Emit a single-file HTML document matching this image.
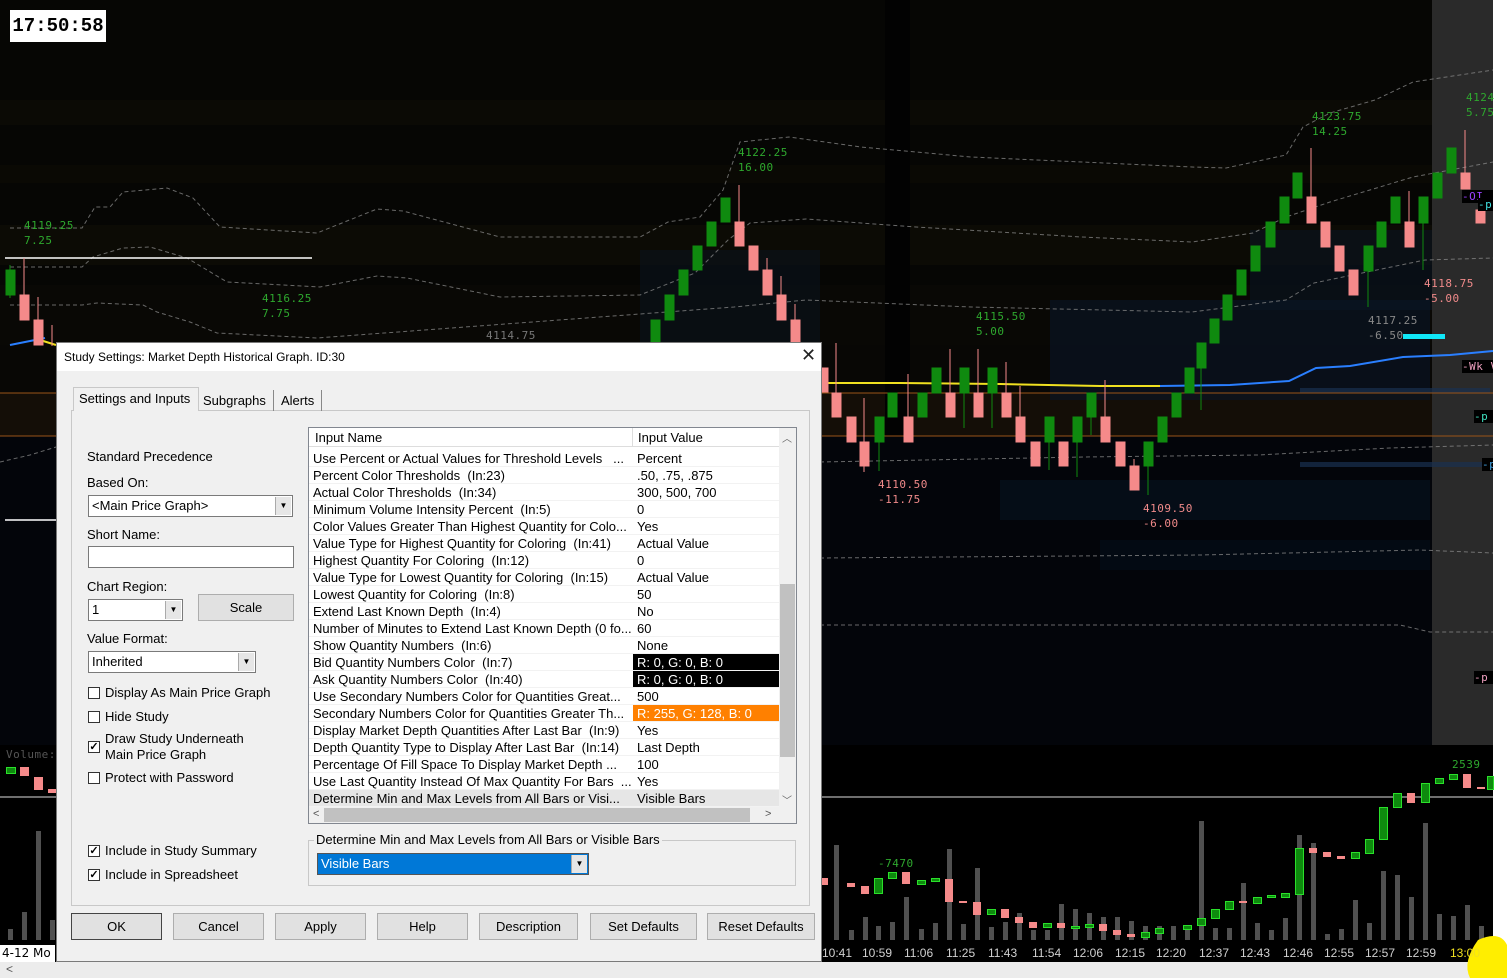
<!DOCTYPE html>
<html><head><meta charset="utf-8">
<style>
*{box-sizing:border-box;margin:0;padding:0}
body{width:1507px;height:978px;overflow:hidden;background:#fff;position:relative;font-family:"Liberation Sans",Arial,sans-serif}
.abs{position:absolute}
.dlg{position:absolute;left:56px;top:342px;width:766px;height:620px;background:#f0f0f0;border:1px solid #7a7a7a;font-size:13px;color:#000}
.dlg .t{position:absolute;white-space:nowrap}
.cb{position:absolute;width:12px;height:12px;border:1px solid #333;background:#fff;font-size:11px;line-height:10px;text-align:center;font-weight:bold}
.combo{position:absolute;background:#fff;border:1px solid #7a7a7a;height:22px;font-size:13px;line-height:20px;padding-left:3px}
.combo .ar{position:absolute;right:1px;top:1px;width:16px;height:18px;background:#e6e6e6;border-left:1px solid #aaa;font-size:8px;text-align:center;line-height:18px}
.btn{position:absolute;top:570px;height:27px;background:#e1e1e1;border:1px solid #adadad;text-align:center;line-height:25px;font-size:13px}
.grid{position:absolute;left:251px;top:84px;width:489px;height:397px;background:#fff;border:1px solid #828790}
.row{position:absolute;left:0;width:470px;height:17px;font-size:13px;line-height:17px;border-bottom:1px solid #f2f2f2}
.row span{position:absolute;white-space:nowrap}
.row .n{left:4px}
.row .v{left:324px;width:146px;padding-left:4px;height:16px}
.lbl{position:absolute;font-family:"DejaVu Sans Mono","Liberation Mono",monospace;font-size:11px;white-space:nowrap;letter-spacing:0.5px}
.ax{position:absolute;top:946px;font-size:12px;color:#d0d0d0;font-family:"Liberation Sans",sans-serif}
</style></head><body>
<svg class="abs" style="left:0;top:0" width="1507" height="978" xmlns="http://www.w3.org/2000/svg">
<rect width="1507" height="978" fill="#050505"/>
<rect x="0" y="0" width="1493" height="745" fill="#060604"/>
<rect x="0" y="100" width="1432" height="25" fill="#0b0a05"/>
<rect x="0" y="165" width="1432" height="18" fill="#0a0904"/>
<rect x="0" y="225" width="1432" height="40" fill="#0c0b05"/>
<rect x="0" y="285" width="1432" height="60" fill="#090805"/>
<rect x="0" y="345" width="1432" height="48" fill="#080705"/>
<rect x="0" y="393" width="1493" height="43" fill="#140e07"/>
<rect x="885" y="0" width="25" height="742" fill="#020202"/>
<rect x="640" y="250" width="180" height="100" fill="#0a1420" opacity="0.5"/>
<rect x="1050" y="300" width="380" height="100" fill="#0a1626" opacity="0.6"/>
<rect x="1250" y="230" width="182" height="80" fill="#0a1626" opacity="0.5"/>
<rect x="0" y="436" width="1493" height="310" fill="#03050a"/>
<rect x="1000" y="480" width="430" height="40" fill="#061220" opacity="0.6"/>
<rect x="1100" y="540" width="330" height="30" fill="#061220" opacity="0.4"/>
<rect x="0" y="745" width="1493" height="200" fill="#000"/>
<rect x="1432" y="0" width="61" height="745" fill="#2a2a2a"/>
<rect x="1493" y="0" width="14" height="945" fill="#fff"/>
<rect x="1300" y="388" width="190" height="5" fill="#1a3050" opacity="0.7"/>
<rect x="1300" y="462" width="190" height="5" fill="#1a3050" opacity="0.7"/>
<line x1="0" y1="393" x2="1493" y2="393" stroke="#9a5418" stroke-width="1"/>
<line x1="0" y1="436" x2="1493" y2="436" stroke="#9a5418" stroke-width="1"/>
<g fill="none" stroke="#8a8a8a" stroke-width="1" stroke-dasharray="4,3" opacity="0.75">
<polyline points="10,228 82,228 95,207 110,207 123,192 167,188 193,198 220,227 317,233 377,209 403,211 500,237 640,237 668,222 700,217 723,190 740,142 789,137 861,147 971,157 1192,167 1226,168 1286,155 1303,127 1330,113 1375,100 1413,82 1493,70"/>
<polyline points="10,267 82,267 93,257 123,248 150,247 187,258 227,282 320,287 377,276 407,278 500,297 640,295 695,273 728,240 750,223 806,219 916,227 1082,237 1192,242 1253,233 1286,217 1330,202 1413,177 1493,162"/>
<polyline points="10,305 82,305 97,303 143,305 157,312 190,322 217,333 317,338 734,307 806,300 971,307 1192,312 1286,300 1314,283 1425,260 1493,258"/>
<polyline points="0,462 30,455 56,447"/>
<polyline points="820,462 1083,457 1258,455 1390,448 1493,445"/>
<polyline points="820,558 1200,555 1420,550 1493,553"/>
<polyline points="820,625 1400,625 1430,632 1493,632"/>
</g>
<line x1="5" y1="258" x2="312" y2="258" stroke="#fff" stroke-width="1.5"/>
<line x1="5" y1="520" x2="56" y2="520" stroke="#fff" stroke-width="1.5"/>
<polyline points="10,345 45,338" fill="none" stroke="#2a7fff" stroke-width="2"/>
<polyline points="40,340 56,345" fill="none" stroke="#f0e020" stroke-width="2"/>
<polyline points="822,383 900,383 1000,384 1100,386 1160,386" fill="none" stroke="#f0e020" stroke-width="2"/>
<polyline points="1160,386 1230,385 1289,381 1316,368 1350,366 1403,357 1450,355 1493,351" fill="none" stroke="#2a7fff" stroke-width="2"/>
<rect x="1403" y="334" width="42" height="5" fill="#10e8f8"/>
<g fill="#0f8a0f" stroke="#0f8a0f">
<line x1="10" y1="265" x2="10" y2="298"/><rect x="6" y="270" width="9" height="25"/>
<rect x="651" y="320" width="9" height="25"/><rect x="665" y="295" width="9" height="25"/><rect x="679" y="270" width="9" height="25"/><rect x="693" y="246" width="9" height="24"/><rect x="707" y="222" width="9" height="24"/><rect x="721" y="198" width="9" height="24"/>
<line x1="879" y1="442" x2="879" y2="471"/><rect x="875" y="417" width="9" height="25"/>
<rect x="888" y="393" width="9" height="24"/>
<rect x="918" y="393" width="9" height="24"/>
<rect x="932" y="368" width="9" height="25"/>
<line x1="964" y1="393" x2="964" y2="428"/><rect x="960" y="368" width="9" height="25"/>
<line x1="992" y1="393" x2="992" y2="428"/><rect x="988" y="368" width="9" height="25"/>
<line x1="1049" y1="442" x2="1049" y2="470"/><rect x="1045" y="417" width="9" height="25"/>
<line x1="1077" y1="442" x2="1077" y2="477"/><rect x="1073" y="417" width="9" height="25"/>
<line x1="1091" y1="417" x2="1091" y2="435"/><rect x="1087" y="393" width="9" height="24"/>
<line x1="1148" y1="466" x2="1148" y2="495"/><rect x="1144" y="442" width="9" height="24"/>
<rect x="1158" y="417" width="9" height="25"/>
<rect x="1172" y="393" width="9" height="24"/>
<rect x="1185" y="368" width="9" height="25"/>
<line x1="1201" y1="368" x2="1201" y2="410"/><rect x="1197" y="343" width="9" height="25"/>
<rect x="1210" y="319" width="9" height="24"/><rect x="1223" y="295" width="9" height="25"/><rect x="1237" y="270" width="9" height="25"/><rect x="1251" y="246" width="9" height="25"/><rect x="1266" y="222" width="9" height="25"/><rect x="1280" y="197" width="9" height="26"/><rect x="1293" y="173" width="9" height="25"/>
<line x1="1368" y1="271" x2="1368" y2="307"/><rect x="1364" y="246" width="9" height="25"/>
<rect x="1377" y="222" width="9" height="25"/><rect x="1391" y="197" width="9" height="26"/>
<line x1="1423" y1="223" x2="1423" y2="270"/><rect x="1419" y="197" width="9" height="26"/>
<rect x="1433" y="173" width="9" height="25"/><rect x="1447" y="148" width="9" height="25"/>
</g>
<g fill="#f58a8a" stroke="#f58a8a">
<line x1="24" y1="258" x2="24" y2="320"/><rect x="20" y="295" width="9" height="25"/>
<line x1="38" y1="297" x2="38" y2="345"/><rect x="34" y="320" width="9" height="25"/>
<line x1="52" y1="325" x2="52" y2="346"/>
<line x1="739" y1="185" x2="739" y2="246"/><rect x="735" y="222" width="9" height="24"/>
<rect x="749" y="246" width="9" height="24"/>
<line x1="767" y1="258" x2="767" y2="295"/><rect x="763" y="270" width="9" height="25"/>
<line x1="781" y1="276" x2="781" y2="320"/><rect x="777" y="295" width="9" height="25"/>
<line x1="795" y1="304" x2="795" y2="345"/><rect x="791" y="320" width="9" height="25"/>
<rect x="822" y="368" width="6" height="24"/>
<line x1="836" y1="343" x2="836" y2="417"/><rect x="832" y="393" width="9" height="24"/>
<rect x="847" y="417" width="9" height="25"/>
<line x1="864" y1="398" x2="864" y2="472"/><rect x="860" y="442" width="9" height="24"/>
<line x1="908" y1="374" x2="908" y2="442"/><rect x="904" y="417" width="9" height="25"/>
<line x1="950" y1="349" x2="950" y2="417"/><rect x="946" y="393" width="9" height="24"/>
<line x1="978" y1="349" x2="978" y2="417"/><rect x="974" y="393" width="9" height="24"/>
<line x1="1006" y1="362" x2="1006" y2="417"/><rect x="1002" y="393" width="9" height="24"/>
<line x1="1020" y1="386" x2="1020" y2="442"/><rect x="1016" y="417" width="9" height="25"/>
<rect x="1031" y="442" width="9" height="24"/>
<rect x="1059" y="442" width="9" height="24"/>
<line x1="1105" y1="380" x2="1105" y2="442"/><rect x="1101" y="417" width="9" height="25"/>
<rect x="1116" y="442" width="9" height="24"/>
<line x1="1134" y1="459" x2="1134" y2="490"/><rect x="1130" y="466" width="9" height="24"/>
<line x1="1311" y1="148" x2="1311" y2="223"/><rect x="1307" y="197" width="9" height="26"/>
<rect x="1321" y="222" width="9" height="25"/><rect x="1335" y="246" width="9" height="25"/><rect x="1349" y="270" width="9" height="25"/>
<line x1="1409" y1="191" x2="1409" y2="247"/><rect x="1405" y="222" width="9" height="25"/>
<line x1="1465" y1="130" x2="1465" y2="189"/><rect x="1461" y="173" width="9" height="16"/>
<rect x="1476" y="210" width="9" height="13"/>
</g>
<line x1="0" y1="797" x2="1493" y2="797" stroke="#ddd" stroke-width="1"/>
<g fill="#505050">
<rect x="8" y="929" width="5" height="11"/><rect x="22" y="912" width="5" height="28"/><rect x="36" y="831" width="5" height="109"/><rect x="50" y="920" width="5" height="20"/>
<rect x="834" y="845" width="5" height="95"/><rect x="849" y="930" width="5" height="10"/><rect x="863" y="917" width="5" height="23"/><rect x="876" y="926" width="5" height="14"/><rect x="890" y="922" width="5" height="18"/><rect x="904" y="897" width="5" height="43"/><rect x="919" y="929" width="5" height="11"/><rect x="933" y="923" width="5" height="17"/><rect x="947" y="849" width="5" height="91"/><rect x="961" y="924" width="5" height="16"/><rect x="975" y="868" width="5" height="72"/><rect x="989" y="927" width="5" height="13"/><rect x="1003" y="922" width="5" height="18"/><rect x="1017" y="913" width="5" height="27"/><rect x="1031" y="930" width="5" height="10"/><rect x="1045" y="930" width="5" height="10"/><rect x="1059" y="904" width="5" height="36"/><rect x="1073" y="909" width="5" height="31"/><rect x="1087" y="913" width="5" height="27"/><rect x="1101" y="917" width="5" height="23"/><rect x="1115" y="917" width="5" height="23"/><rect x="1129" y="921" width="5" height="19"/><rect x="1143" y="926" width="5" height="14"/><rect x="1157" y="926" width="5" height="14"/><rect x="1171" y="926" width="5" height="14"/><rect x="1185" y="929" width="5" height="11"/><rect x="1199" y="821" width="5" height="119"/><rect x="1213" y="928" width="5" height="12"/><rect x="1227" y="928" width="5" height="12"/><rect x="1241" y="883" width="5" height="57"/><rect x="1255" y="923" width="5" height="17"/><rect x="1269" y="930" width="5" height="10"/><rect x="1283" y="918" width="5" height="22"/><rect x="1297" y="835" width="5" height="105"/><rect x="1311" y="843" width="5" height="97"/><rect x="1325" y="934" width="5" height="6"/><rect x="1339" y="929" width="5" height="11"/><rect x="1353" y="900" width="5" height="40"/><rect x="1367" y="923" width="5" height="17"/><rect x="1381" y="871" width="5" height="69"/><rect x="1395" y="875" width="5" height="65"/><rect x="1409" y="897" width="5" height="43"/><rect x="1423" y="823" width="5" height="117"/><rect x="1437" y="914" width="5" height="26"/><rect x="1451" y="916" width="5" height="24"/><rect x="1465" y="905" width="5" height="35"/><rect x="1479" y="926" width="5" height="14"/>
</g>
<g fill="#0e8a0e" stroke="#2ae02a" stroke-width="1">
<rect x="6.5" y="767.5" width="9" height="6"/>
<rect x="874.5" y="878.5" width="8" height="15"/><rect x="888.5" y="872.5" width="8" height="6"/><rect x="917.5" y="880.5" width="8" height="4"/><rect x="931.5" y="878.5" width="8" height="3"/><rect x="987.5" y="909.5" width="8" height="5"/><rect x="1043.5" y="923.5" width="8" height="4"/><rect x="1071.5" y="926.5" width="8" height="2"/><rect x="1085.5" y="924.5" width="8" height="3"/><rect x="1141.5" y="932.5" width="8" height="5"/><rect x="1155.5" y="928.5" width="8" height="5"/><rect x="1183.5" y="925.5" width="8" height="4"/><rect x="1197.5" y="918.5" width="8" height="7"/><rect x="1211.5" y="909.5" width="8" height="9"/><rect x="1225.5" y="901.5" width="8" height="8"/><rect x="1253.5" y="897.5" width="8" height="6"/><rect x="1267.5" y="895.5" width="8" height="2"/><rect x="1281.5" y="893.5" width="8" height="4"/><rect x="1295.5" y="848.5" width="8" height="46"/><rect x="1351.5" y="852.5" width="8" height="6"/><rect x="1365.5" y="839.5" width="8" height="14"/><rect x="1379.5" y="807.5" width="8" height="32"/><rect x="1393.5" y="793.5" width="8" height="14"/><rect x="1421.5" y="783.5" width="8" height="19"/><rect x="1435.5" y="778.5" width="8" height="5"/><rect x="1449.5" y="774.5" width="8" height="5"/><rect x="1487.5" y="776.5" width="6" height="13"/>
</g>
<g fill="#f58a8a">
<rect x="20" y="767" width="9" height="9"/><rect x="34" y="777" width="9" height="13"/><rect x="48" y="789" width="8" height="4"/>
<rect x="822" y="878" width="6" height="7"/><rect x="847" y="883" width="8" height="4"/><rect x="861" y="886" width="8" height="8"/><rect x="902" y="872" width="8" height="12"/><rect x="945" y="879" width="8" height="23"/><rect x="959" y="901" width="8" height="2"/><rect x="973" y="902" width="8" height="13"/><rect x="1001" y="909" width="8" height="9"/><rect x="1015" y="917" width="8" height="6"/><rect x="1029" y="922" width="8" height="6"/><rect x="1057" y="923" width="8" height="5"/><rect x="1099" y="924" width="8" height="7"/><rect x="1113" y="930" width="8" height="5"/><rect x="1127" y="934" width="8" height="3"/><rect x="1239" y="901" width="8" height="2"/><rect x="1309" y="848" width="8" height="5"/><rect x="1323" y="852" width="8" height="5"/><rect x="1337" y="856" width="8" height="3"/><rect x="1407" y="793" width="8" height="10"/><rect x="1463" y="774" width="8" height="14"/><rect x="1477" y="787" width="8" height="2"/>
</g>
<rect x="0" y="945" width="1493" height="17" fill="#000"/>
<rect x="0" y="962" width="1507" height="16" fill="#ececec"/>
<path d="M1478,940 Q1500,930 1507,945 L1507,978 L1470,978 Q1462,962 1478,940 Z" fill="#ffee00"/>
</svg>

<div class="abs" style="left:10px;top:10px;width:96px;height:32px;background:#fff;font:bold 19px 'Liberation Mono',monospace;line-height:32px;text-align:center;color:#000">17:50:58</div>
<div class="lbl" style="left:24px;top:219px;color:#2ea82e">4119.25</div>
<div class="lbl" style="left:24px;top:234px;color:#2ea82e">7.25</div>
<div class="lbl" style="left:262px;top:292px;color:#2ea82e">4116.25</div>
<div class="lbl" style="left:262px;top:307px;color:#2ea82e">7.75</div>
<div class="lbl" style="left:486px;top:329px;color:#777">4114.75</div>
<div class="lbl" style="left:738px;top:146px;color:#2ea82e">4122.25</div>
<div class="lbl" style="left:738px;top:161px;color:#2ea82e">16.00</div>
<div class="lbl" style="left:976px;top:310px;color:#2ea82e">4115.50</div>
<div class="lbl" style="left:976px;top:325px;color:#2ea82e">5.00</div>
<div class="lbl" style="left:878px;top:478px;color:#f08a8a">4110.50</div>
<div class="lbl" style="left:878px;top:493px;color:#f08a8a">-11.75</div>
<div class="lbl" style="left:1143px;top:502px;color:#f08a8a">4109.50</div>
<div class="lbl" style="left:1143px;top:517px;color:#f08a8a">-6.00</div>
<div class="lbl" style="left:1312px;top:110px;color:#2ea82e">4123.75</div>
<div class="lbl" style="left:1312px;top:125px;color:#2ea82e">14.25</div>
<div class="lbl" style="left:1368px;top:314px;color:#888">4117.25</div>
<div class="lbl" style="left:1368px;top:329px;color:#888">-6.50</div>
<div class="lbl" style="left:1424px;top:277px;color:#f08a8a">4118.75</div>
<div class="lbl" style="left:1424px;top:292px;color:#f08a8a">-5.00</div>
<div class="lbl" style="left:1466px;top:91px;color:#2ea82e">4124</div>
<div class="lbl" style="left:1466px;top:106px;color:#2ea82e">5.75</div>
<div class="lbl" style="left:1462px;top:190px;color:#9a40ff;background:#000;width:31px;overflow:hidden">-OI</div>
<div class="lbl" style="left:1478px;top:198px;color:#40e0e0;background:#000;width:15px;overflow:hidden">-p</div>
<div class="lbl" style="left:1462px;top:360px;color:#f0a0c0;background:#000;width:31px;overflow:hidden">-Wk V</div>
<div class="lbl" style="left:1474px;top:410px;color:#40e0c0;background:#000;width:19px;overflow:hidden">-p</div>
<div class="lbl" style="left:1482px;top:458px;color:#40a0e0;background:#000;width:11px;overflow:hidden">-p</div>
<div class="lbl" style="left:1474px;top:671px;color:#f0a0c0;background:#000;width:19px;overflow:hidden">-p</div>
<div class="lbl" style="left:6px;top:748px;color:#555">Volume:</div>
<div class="lbl" style="left:878px;top:857px;color:#2ea82e">-7470</div>
<div class="lbl" style="left:1452px;top:758px;color:#2ea82e">2539</div>
<div class="abs" style="left:0;top:945px;width:55px;height:17px;background:#fff;font:12px 'DejaVu Sans',sans-serif;line-height:17px;color:#000;padding-left:2px;white-space:nowrap;overflow:hidden">4-12 Mo</div>
<div class="abs" style="left:6px;top:962px;font-size:12px;color:#555">&lt;</div>
<div class="ax" style="left:822px">10:41</div><div class="ax" style="left:862px">10:59</div><div class="ax" style="left:904px">11:06</div><div class="ax" style="left:946px">11:25</div><div class="ax" style="left:988px">11:43</div><div class="ax" style="left:1032px">11:54</div><div class="ax" style="left:1073px">12:06</div><div class="ax" style="left:1115px">12:15</div><div class="ax" style="left:1156px">12:20</div><div class="ax" style="left:1199px">12:37</div><div class="ax" style="left:1240px">12:43</div><div class="ax" style="left:1283px">12:46</div><div class="ax" style="left:1324px">12:55</div><div class="ax" style="left:1365px">12:57</div><div class="ax" style="left:1406px">12:59</div><div class="ax" style="left:1450px;color:#f0e020">13:00</div>

<div class="dlg">
 <div class="abs" style="left:0;top:0;width:764px;height:28px;background:#fff"></div>
 <div class="t" style="left:7px;top:7px;font-size:12px">Study Settings: Market Depth Historical Graph. ID:30</div>
 <div class="t" style="left:744px;top:2px;font-size:18px;color:#222">✕</div>
 <div class="abs" style="left:14px;top:67px;width:739px;height:496px;border:1px solid #c8c8c8;background:#f0f0f0"></div>
 <div class="abs" style="left:16px;top:44px;width:126px;height:24px;background:#f0f0f0;border:1px solid #c8c8c8;border-bottom:none"></div>
 <div class="t" style="left:22px;top:48px">Settings and Inputs</div>
 <div class="abs" style="left:142px;top:47px;width:75px;height:21px;border-right:1px solid #888"></div>
 <div class="t" style="left:146px;top:50px">Subgraphs</div>
 <div class="abs" style="left:218px;top:47px;width:47px;height:21px;border-right:1px solid #888"></div>
 <div class="t" style="left:224px;top:50px">Alerts</div>

 <div class="t" style="left:30px;top:106px">Standard Precedence</div>
 <div class="t" style="left:30px;top:132px">Based On:</div>
 <div class="combo" style="left:31px;top:152px;width:205px">&lt;Main Price Graph&gt;<div class="ar">▼</div></div>
 <div class="t" style="left:30px;top:184px">Short Name:</div>
 <div class="combo" style="left:31px;top:203px;width:206px"></div>
 <div class="t" style="left:30px;top:236px">Chart Region:</div>
 <div class="combo" style="left:31px;top:256px;width:95px">1<div class="ar">▼</div></div>
 <div class="btn" style="left:141px;top:251px;width:96px;height:27px">Scale</div>
 <div class="t" style="left:30px;top:288px">Value Format:</div>
 <div class="combo" style="left:31px;top:308px;width:168px">Inherited<div class="ar">▼</div></div>
 <div class="cb" style="left:31px;top:344px"></div><div class="t" style="left:48px;top:342px">Display As Main Price Graph</div>
 <div class="cb" style="left:31px;top:368px"></div><div class="t" style="left:48px;top:366px">Hide Study</div>
 <div class="cb" style="left:31px;top:398px">✓</div><div class="t" style="left:48px;top:388px;line-height:16px">Draw Study Underneath<br>Main Price Graph</div>
 <div class="cb" style="left:31px;top:429px"></div><div class="t" style="left:48px;top:427px">Protect with Password</div>
 <div class="cb" style="left:31px;top:502px">✓</div><div class="t" style="left:48px;top:500px">Include in Study Summary</div>
 <div class="cb" style="left:31px;top:526px">✓</div><div class="t" style="left:48px;top:524px">Include in Spreadsheet</div>

 <div class="grid">
  <div class="abs" style="left:0;top:0;width:470px;height:19px;border-bottom:1px solid #ddd"></div>
  <div class="abs" style="left:323px;top:0;width:1px;height:19px;background:#ddd"></div>
  <div class="t" style="left:6px;top:2px">Input Name</div>
  <div class="t" style="left:329px;top:2px">Input Value</div>
  <div class="row" style="top:22px"><span class="n">Use Percent or Actual Values for Threshold Levels &nbsp; ...</span><span class="v">Percent</span></div>
  <div class="row" style="top:39px"><span class="n">Percent Color Thresholds &nbsp;(In:23)</span><span class="v">.50, .75, .875</span></div>
  <div class="row" style="top:56px"><span class="n">Actual Color Thresholds &nbsp;(In:34)</span><span class="v">300, 500, 700</span></div>
  <div class="row" style="top:73px"><span class="n">Minimum Volume Intensity Percent &nbsp;(In:5)</span><span class="v">0</span></div>
  <div class="row" style="top:90px"><span class="n">Color Values Greater Than Highest Quantity for Colo...</span><span class="v">Yes</span></div>
  <div class="row" style="top:107px"><span class="n">Value Type for Highest Quantity for Coloring &nbsp;(In:41)</span><span class="v">Actual Value</span></div>
  <div class="row" style="top:124px"><span class="n">Highest Quantity For Coloring &nbsp;(In:12)</span><span class="v">0</span></div>
  <div class="row" style="top:141px"><span class="n">Value Type for Lowest Quantity for Coloring &nbsp;(In:15)</span><span class="v">Actual Value</span></div>
  <div class="row" style="top:158px"><span class="n">Lowest Quantity for Coloring &nbsp;(In:8)</span><span class="v">50</span></div>
  <div class="row" style="top:175px"><span class="n">Extend Last Known Depth &nbsp;(In:4)</span><span class="v">No</span></div>
  <div class="row" style="top:192px"><span class="n">Number of Minutes to Extend Last Known Depth (0 fo...</span><span class="v">60</span></div>
  <div class="row" style="top:209px"><span class="n">Show Quantity Numbers &nbsp;(In:6)</span><span class="v">None</span></div>
  <div class="row" style="top:226px"><span class="n">Bid Quantity Numbers Color &nbsp;(In:7)</span><span class="v" style="background:#000;color:#fff">R: 0, G: 0, B: 0</span></div>
  <div class="row" style="top:243px"><span class="n">Ask Quantity Numbers Color &nbsp;(In:40)</span><span class="v" style="background:#000;color:#fff">R: 0, G: 0, B: 0</span></div>
  <div class="row" style="top:260px"><span class="n">Use Secondary Numbers Color for Quantities Great...</span><span class="v">500</span></div>
  <div class="row" style="top:277px"><span class="n">Secondary Numbers Color for Quantities Greater Th...</span><span class="v" style="background:#ff8000;color:#fff">R: 255, G: 128, B: 0</span></div>
  <div class="row" style="top:294px"><span class="n">Display Market Depth Quantities After Last Bar &nbsp;(In:9)</span><span class="v">Yes</span></div>
  <div class="row" style="top:311px"><span class="n">Depth Quantity Type to Display After Last Bar &nbsp;(In:14)</span><span class="v">Last Depth</span></div>
  <div class="row" style="top:328px"><span class="n">Percentage Of Fill Space To Display Market Depth ...</span><span class="v">100</span></div>
  <div class="row" style="top:345px"><span class="n">Use Last Quantity Instead Of Max Quantity For Bars &nbsp;...</span><span class="v">Yes</span></div>
  <div class="row" style="top:362px;background:#e6e6e6"><span class="n">Determine Min and Max Levels from All Bars or Visi...</span><span class="v">Visible Bars</span></div>
  <div class="abs" style="left:470px;top:0;width:17px;height:379px;background:#f0f0f0"></div>
  <div class="abs" style="left:471px;top:156px;width:15px;height:173px;background:#c1c1c1"></div>
  <div class="t" style="left:473px;top:2px;font-size:10px;color:#666">︿</div>
  <div class="t" style="left:473px;top:364px;font-size:10px;color:#666">﹀</div>
  <div class="abs" style="left:0;top:379px;width:487px;height:16px;background:#f0f0f0"></div>
  <div class="abs" style="left:15px;top:380px;width:426px;height:14px;background:#c1c1c1"></div>
  <div class="t" style="left:4px;top:380px;font-size:11px;color:#555">&lt;</div>
  <div class="t" style="left:456px;top:380px;font-size:11px;color:#555">&gt;</div>
 </div>

 <div class="abs" style="left:251px;top:497px;width:488px;height:46px;border:1px solid #c8c8c8"></div>
 <div class="t" style="left:257px;top:489px;background:#f0f0f0;padding:0 2px">Determine Min and Max Levels from All Bars or Visible Bars</div>
 <div class="combo" style="left:260px;top:510px;width:272px;background:#0078d7;color:#fff;border-color:#555">Visible Bars<div class="ar" style="color:#000">▼</div></div>

 <div class="btn" style="left:14px;width:91px;border:1px solid #444">OK</div>
 <div class="btn" style="left:116px;width:91px">Cancel</div>
 <div class="btn" style="left:218px;width:91px">Apply</div>
 <div class="btn" style="left:320px;width:91px">Help</div>
 <div class="btn" style="left:422px;width:99px">Description</div>
 <div class="btn" style="left:533px;width:107px">Set Defaults</div>
 <div class="btn" style="left:650px;width:108px">Reset Defaults</div>
</div>
</body></html>
